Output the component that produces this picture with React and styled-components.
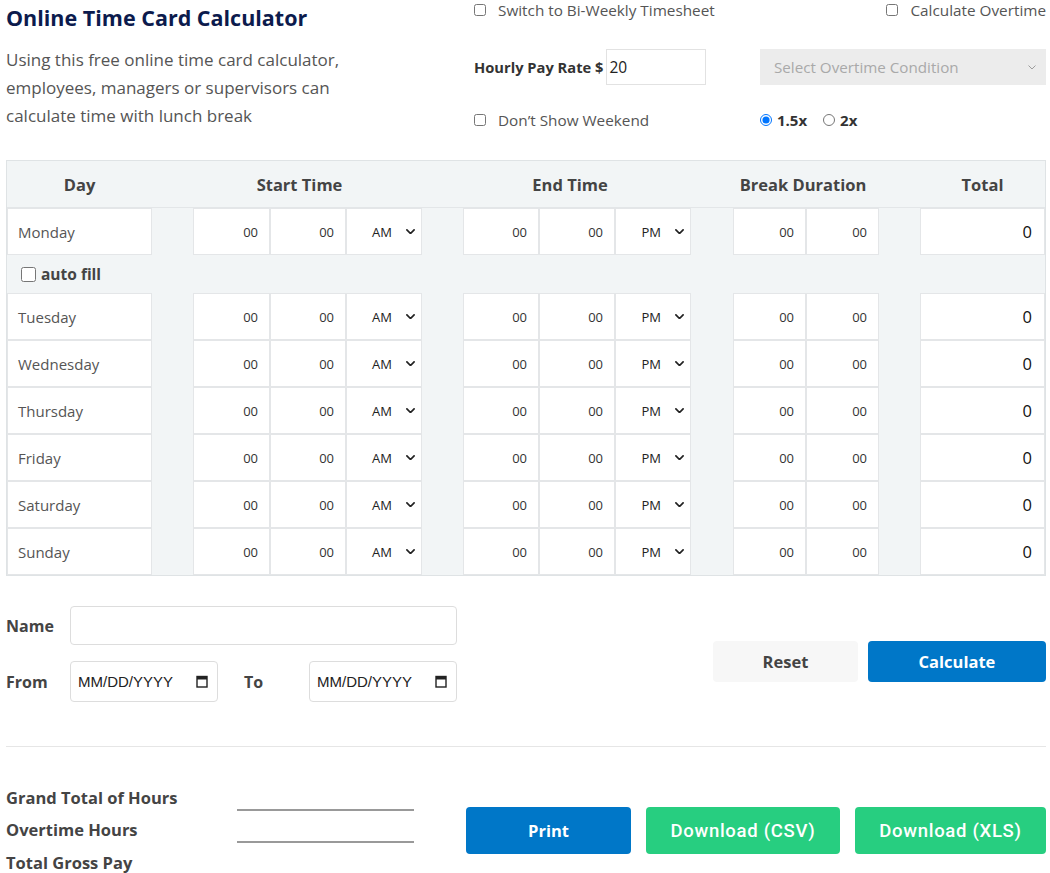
import React from 'react';
import styled, { createGlobalStyle } from 'styled-components';

const GlobalStyle = createGlobalStyle`
	* { box-sizing: border-box; }
	body {
		margin: 0;
		background: #fff;
		font-family: "Open Sans", Lato, Arial, sans-serif;
		color: #444;
	}
`;

const Page = styled.div`
	width: 1040px;
	margin-left: 6px;
`;

const Top = styled.div`
	display: flex;
	justify-content: space-between;
	height: 160px;
`;

const Intro = styled.div`
	width: 360px;
`;

const Title = styled.h1`
	margin: 0;
	font-size: 21.5px;
	line-height: 36px;
	font-weight: 700;
	color: #0c1b4d;
`;

const Lead = styled.p`
	margin: 10px 0 0;
	font-size: 17px;
	line-height: 28px;
	color: #555;
`;

const Options = styled.div`
	display: flex;
	flex-direction: column;
	width: 572px;
`;

const OptionRow = styled.div`
	display: grid;
	grid-template-columns: 286px 286px;
	align-items: center;
	height: ${(p) => p.$h}px;
	margin-top: ${(p) => p.$mt || 0}px;
`;

const CheckLine = styled.label`
	display: flex;
	align-items: center;
	gap: 12px;
	font-size: 15.3px;
	color: #555;
	justify-self: ${(p) => (p.$end ? 'end' : 'start')};

	input {
		margin: 0;
		width: 12px;
		height: 12px;
	}
`;

const RateLine = styled.label`
	display: flex;
	align-items: center;
	font-size: 14.7px;
	font-weight: 700;
	color: #333;
	gap: 3px;
`;

const RateInput = styled.input`
	width: 100px;
	height: 36px;
	border: 1px solid #e2e2e2;
	padding: 0 2px;
	font: inherit;
	font-weight: 400;
	font-size: 15.5px;
	color: #222;
	outline: none;
`;

const OvertimeSelect = styled.div`
	display: flex;
	align-items: center;
	justify-content: space-between;
	height: 36px;
	padding: 0 10px 0 14px;
	background: #ececec;
	color: #a9a9a9;
	font-size: 15.2px;
`;

const Radios = styled.div`
	display: flex;
	align-items: center;
	gap: 16px;
`;

const RadioLine = styled.label`
	display: flex;
	align-items: center;
	gap: 5px;
	font-size: 15px;
	font-weight: 700;
	color: #333;

	input {
		margin: 0;
		width: 12px;
		height: 12px;
		accent-color: #0075ff;
	}
`;

const Table = styled.div`
	background: #f2f5f6;
	border: 1px solid #dfe3e5;
`;

const columns = '145px 41px 77px 76px 76px 41px 76px 76px 76px 42px 73px 73px 41px 125px';

const HeadRow = styled.div`
	display: grid;
	grid-template-columns: ${columns};
	height: 47px;
	border-bottom: 1px solid #e3e6e8;
	align-items: center;
`;

const HeadCell = styled.div`
	grid-column: ${(p) => p.$col};
	padding-right: ${(p) => p.$shift || 0}px;
	text-align: center;
	font-size: 16.5px;
	font-weight: 700;
	color: #444;
`;

const Row = styled.div`
	display: grid;
	grid-template-columns: ${columns};
	height: 47px;
`;

const Gap = styled.div``;

const DayCell = styled.div`
	display: flex;
	align-items: center;
	padding-left: 10px;
	background: #fff;
	border: 1px solid #e4e6e8;
	font-size: 15px;
	color: #555;
`;

const NumInput = styled.input`
	width: 100%;
	height: 100%;
	border: 1px solid #e4e6e8;
	background: #fff;
	text-align: right;
	padding: 0 11px 0 0;
	font-family: "Open Sans", Arial, sans-serif;
	font-size: 13px;
	color: #333;
	outline: none;
`;

const TotalInput = styled(NumInput)`
	font-size: 16.5px;
	color: #111;
	padding-right: 12px;
`;

const AmPmBox = styled.div`
	display: flex;
	align-items: center;
	background: #fff;
	border: 1px solid #e4e6e8;
	padding-right: 6px;

	select {
		flex: 1;
		appearance: none;
		border: none;
		background: transparent;
		text-align: right;
		text-align-last: right;
		padding-right: 14px;
		font-family: "Open Sans", Arial, sans-serif;
		font-size: 13px;
		color: #222;
		outline: none;
	}
`;

const AutoFillRow = styled.label`
	display: flex;
	align-items: center;
	gap: 5px;
	height: 38px;
	padding-left: 14px;
	font-size: 15.5px;
	font-weight: 700;
	color: #444;

	input {
		margin: 0;
		width: 15px;
		height: 15px;
	}
`;

const FormArea = styled.div`
	display: flex;
	justify-content: space-between;
	margin-top: 30px;
	padding-bottom: 44px;
	border-bottom: 1px solid #e6e6e6;
`;

const FormGrid = styled.div`
	display: grid;
	grid-template-columns: 64px 148px 91px 148px;
	grid-template-rows: 39px 41px;
	row-gap: 16px;
	align-items: center;
`;

const FieldLabel = styled.label`
	font-size: 16px;
	font-weight: 700;
	color: #444;
	padding-left: ${(p) => p.$indent || 0}px;
`;

const NameInput = styled.input`
	grid-column: 2 / 5;
	height: 39px;
	border: 1px solid #ddd;
	border-radius: 4px;
	outline: none;
`;

const DateBox = styled.label`
	display: flex;
	align-items: center;
	height: 41px;
	border: 1px solid #ddd;
	border-radius: 4px;
	padding: 0 9px 0 7px;

	input {
		flex: 1;
		min-width: 0;
		border: none;
		outline: none;
		font-family: Arial, "Liberation Sans", sans-serif;
		font-size: 15px;
		color: #222;
		padding: 0;
	}
	input::placeholder { color: #222; }
`;

const FormButtons = styled.div`
	display: flex;
	align-self: flex-end;
	gap: 10px;
	margin-bottom: 20px;
`;

const Button = styled.button`
	width: ${(p) => p.$w}px;
	height: ${(p) => p.$h || 41}px;
	border: none;
	border-radius: 4px;
	background: ${(p) => p.$bg};
	color: ${(p) => p.$fg || '#fff'};
	font-family: "Open Sans", Arial, sans-serif;
	font-size: 16.5px;
	font-weight: 700;
	cursor: pointer;
`;

const DownloadButton = styled(Button)`
	font-family: Roboto, Arial, sans-serif;
	font-size: 18.5px;
	font-weight: 500;
	letter-spacing: 0.7px;
`;

const Summary = styled.div`
	display: flex;
	justify-content: space-between;
	padding-top: 34px;
`;

const Totals = styled.div`
	display: grid;
	grid-template-columns: 231px 177px;
	grid-auto-rows: 32.5px;
`;

const TotalLabel = styled.div`
	display: flex;
	align-items: center;
	font-size: 16.5px;
	font-weight: 700;
	color: #444;
`;

const TotalValue = styled.div`
	border-bottom: ${(p) => (p.$line ? '2px solid #999' : 'none')};
	margin-bottom: 3px;
`;

const ExportButtons = styled.div`
	display: flex;
	gap: 15px;
	margin-top: 26px;
`;

const Chevron = ({ size = 10, color = '#222', stroke = 2 }) => (
	<svg width={size} height={size * 0.6} viewBox="0 0 10 6" style={{ pointerEvents: 'none', flexShrink: 0 }}>
		<path d="M1 1l4 4 4-4" fill="none" stroke={color} strokeWidth={stroke} strokeLinecap="round" strokeLinejoin="round" />
	</svg>
);

const CalendarIcon = () => (
	<svg width="12" height="13" viewBox="0 0 12 13">
		<rect x="1" y="1.5" width="10" height="10.5" fill="none" stroke="#222" strokeWidth="1.4" />
		<rect x="1" y="1.5" width="10" height="3" fill="#222" />
	</svg>
);

const AmPm = ({ value }) => (
	<AmPmBox>
		<select defaultValue={value}>
			<option>AM</option>
			<option>PM</option>
		</select>
		<Chevron size={9} stroke={1.9} />
	</AmPmBox>
);

const DayRow = ({ day }) => (
	<Row>
		<DayCell>{day}</DayCell>
		<Gap />
		<NumInput defaultValue="00" />
		<NumInput defaultValue="00" />
		<AmPm value="AM" />
		<Gap />
		<NumInput defaultValue="00" />
		<NumInput defaultValue="00" />
		<AmPm value="PM" />
		<Gap />
		<NumInput defaultValue="00" />
		<NumInput defaultValue="00" />
		<Gap />
		<TotalInput defaultValue="0" />
	</Row>
);

const DateField = () => (
	<DateBox>
		<input type="text" placeholder="MM/DD/YYYY" />
		<CalendarIcon />
	</DateBox>
);

const otherDays = ['Tuesday', 'Wednesday', 'Thursday', 'Friday', 'Saturday', 'Sunday'];

const App = () => {
	return (
		<Page>
			<GlobalStyle />
			<Top>
				<Intro>
					<Title>Online Time Card Calculator</Title>
					<Lead>
						Using this free online time card calculator, employees, managers or supervisors can
						calculate time with lunch break
					</Lead>
				</Intro>

				<Options>
					<OptionRow $h={20}>
						<CheckLine>
							<input type="checkbox" />
							Switch to Bi-Weekly Timesheet
						</CheckLine>
						<CheckLine $end>
							<input type="checkbox" />
							Calculate Overtime
						</CheckLine>
					</OptionRow>

					<OptionRow $h={36} $mt={29}>
						<RateLine>
							Hourly Pay Rate $
							<RateInput defaultValue="20" />
						</RateLine>
						<OvertimeSelect>
							Select Overtime Condition
							<Chevron size={8} color="#999" stroke={1.2} />
						</OvertimeSelect>
					</OptionRow>

					<OptionRow $h={20} $mt={25}>
						<CheckLine>
							<input type="checkbox" />
							Don’t Show Weekend
						</CheckLine>
						<Radios>
							<RadioLine>
								<input type="radio" name="rate" defaultChecked />
								1.5x
							</RadioLine>
							<RadioLine>
								<input type="radio" name="rate" />
								2x
							</RadioLine>
						</Radios>
					</OptionRow>
				</Options>
			</Top>

			<Table>
				<HeadRow>
					<HeadCell $col="1">Day</HeadCell>
					<HeadCell $col="3 / 6" $shift={16}>Start Time</HeadCell>
					<HeadCell $col="7 / 10" $shift={14}>End Time</HeadCell>
					<HeadCell $col="11 / 13" $shift={6}>Break Duration</HeadCell>
					<HeadCell $col="14">Total</HeadCell>
				</HeadRow>
				<DayRow day="Monday" />
				<AutoFillRow>
					<input type="checkbox" />
					auto fill
				</AutoFillRow>
				{otherDays.map((day) => (
					<DayRow key={day} day={day} />
				))}
			</Table>

			<FormArea>
				<FormGrid>
					<FieldLabel>Name</FieldLabel>
					<NameInput />
					<FieldLabel>From</FieldLabel>
					<DateField />
					<FieldLabel $indent={26}>To</FieldLabel>
					<DateField />
				</FormGrid>
				<FormButtons>
					<Button $w={145} $bg="#f7f7f7" $fg="#444">Reset</Button>
					<Button $w={178} $bg="#0077c8">Calculate</Button>
				</FormButtons>
			</FormArea>

			<Summary>
				<Totals>
					<TotalLabel>Grand Total of Hours</TotalLabel>
					<TotalValue $line />
					<TotalLabel>Overtime Hours</TotalLabel>
					<TotalValue $line />
					<TotalLabel>Total Gross Pay</TotalLabel>
					<TotalValue />
				</Totals>
				<ExportButtons>
					<Button $w={165} $h={47} $bg="#0077c8">Print</Button>
					<DownloadButton $w={194} $h={47} $bg="#27ce80">Download (CSV)</DownloadButton>
					<DownloadButton $w={191} $h={47} $bg="#27ce80">Download (XLS)</DownloadButton>
				</ExportButtons>
			</Summary>
		</Page>
	);
};

export default App;
